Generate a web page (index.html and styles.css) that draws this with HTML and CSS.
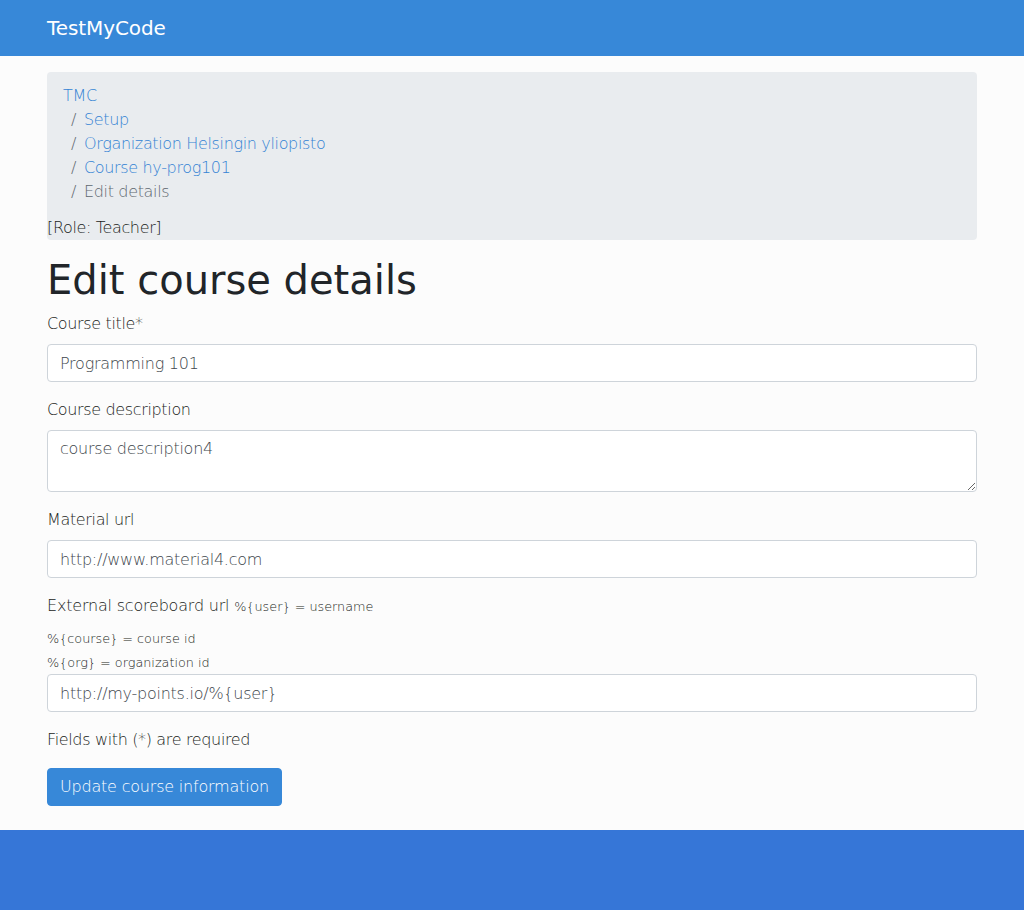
FILE: index.html
```html
<!DOCTYPE html>
<html lang="en">
<head>
<meta charset="utf-8">
<title>Edit course details</title>
<link rel="stylesheet" href="styles.css">
</head>
<body>
<nav class="navbar">
  <div class="container">
    <a class="brand" href="#">TestMyCode</a>
  </div>
</nav>
<main class="container main">
  <div class="crumbs">
    <ol class="breadcrumb">
      <li class="crumb"><a href="#">TMC</a></li>
      <li class="crumb sep"><a href="#">Setup</a></li>
      <li class="crumb sep"><a href="#">Organization Helsingin yliopisto</a></li>
      <li class="crumb sep"><a href="#">Course hy-prog101</a></li>
      <li class="crumb sep active">Edit details</li>
    </ol>
    <div class="role">[Role: Teacher]</div>
  </div>
  <h1 class="title">Edit course details</h1>
  <form class="form">
    <div class="group">
      <label class="label" for="t">Course title*</label>
      <input class="control" id="t" type="text" value="Programming 101">
    </div>
    <div class="group">
      <label class="label" for="d">Course description</label>
      <textarea class="control area" id="d" rows="2">course description4</textarea>
    </div>
    <div class="group">
      <label class="label" for="m">Material url</label>
      <input class="control" id="m" type="text" value="http://www.material4.com">
    </div>
    <div class="group">
      <label class="label label-ext" for="e">External scoreboard url <small class="hint">%{user} = username</small></label>
      <div class="hint-line"><small class="hint">%{course} = course id</small></div>
      <div class="hint-line"><small class="hint">%{org} = organization id</small></div>
      <input class="control" id="e" type="text" value="http://my-points.io/%{user}">
    </div>
    <p class="note">Fields with (*) are required</p>
    <button class="btn" type="button">Update course information</button>
  </form>
</main>
<footer class="footer"></footer>
</body>
</html>
```
FILE: styles.css
```css
* { box-sizing: border-box; }
html, body { margin: 0; padding: 0; }
body {
  font-family: "DejaVu Sans", sans-serif;
  font-size: 16px;
  line-height: 24px;
  font-weight: 300;
  letter-spacing: -0.35px;
  color: #1a1d21;
  background: #fcfcfc;
}
a { color: #3483d4; text-decoration: none; }
.container { width: 960px; margin: 0 auto; padding: 0 15px; }
.navbar { background: #3788d8; height: 56px; }
.navbar .container { height: 56px; display: flex; align-items: center; }
.brand { color: #fff; font-size: 20px; font-weight: 400; line-height: 30px; letter-spacing: -0.1px; }
.main { padding-top: 16px; padding-bottom: 24px; }
.crumbs { background: #e9ecef; border-radius: 4px; margin-bottom: 16px; }
.breadcrumb { list-style: none; margin: 0; padding: 12px 16px; }
.crumb { display: block; }
.crumb.sep { padding-left: 8px; }
.crumb.sep::before { content: "/"; color: #5f6870; padding-right: 8px; }
.crumb.active { color: #5f6870; }
.role { line-height: 24px; }
.title { font-size: 40px; line-height: 48px; font-weight: 400; letter-spacing: 0; color: #212529; margin: 0 0 8px; }
.form { margin: 0; }
.group { margin-bottom: 16px; }
.label { display: inline-block; margin-bottom: 8px; }
.label-ext { letter-spacing: -0.2px; }
.hint { font-size: 12.8px; line-height: 1; letter-spacing: 0; }
.hint-line { line-height: 24px; }
.control {
  display: block;
  width: 100%;
  height: 38px;
  padding: 6px 12px;
  font-family: inherit;
  font-size: 16px;
  font-weight: 300;
  letter-spacing: -0.25px;
  line-height: 24px;
  color: #40464c;
  background: #fff;
  border: 1px solid #ced4da;
  border-radius: 4px;
  margin: 0;
}
.area { height: 62px; resize: vertical; }
.note { margin: 0 0 16px; }
.btn {
  display: inline-block;
  font-family: inherit;
  font-size: 16px;
  font-weight: 300;
  letter-spacing: -0.2px;
  line-height: 24px;
  padding: 6px 12px;
  color: #fff;
  background: #3788d8;
  border: 1px solid #3788d8;
  border-radius: 4px;
}
.footer { background: #3676d7; height: 80px; }
```
